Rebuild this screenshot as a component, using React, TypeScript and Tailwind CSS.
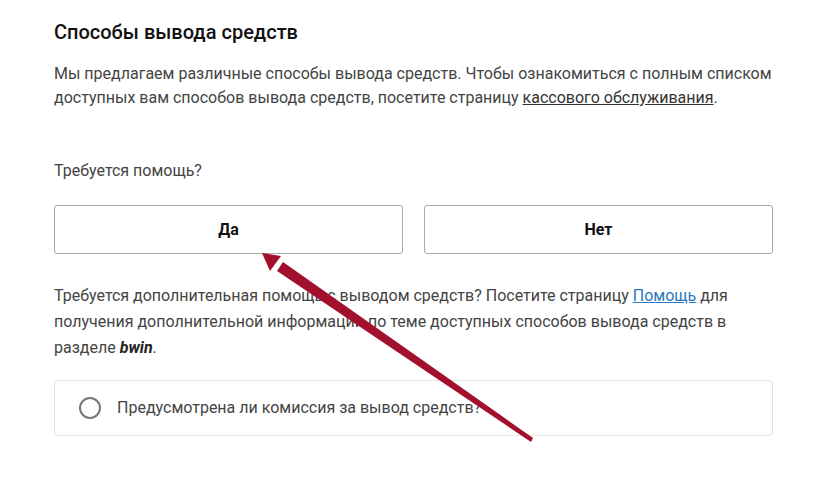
import React from "react";

const App: React.FC = () => {
  return (
    <div className="relative min-h-screen bg-white font-['Roboto',sans-serif]">
      <div className="w-[719px] ml-[54px] pt-[18px]">
        <h2 className="text-[20px] leading-[28px] font-medium text-[#111]">
          Способы вывода средств
        </h2>
        <p className="mt-[16px] text-[16px] leading-[24px] text-[#444]">
          Мы предлагаем различные способы вывода средств. Чтобы ознакомиться с полным списком
          доступных вам способов вывода средств, посетите страницу{" "}
          <a href="#" className="underline text-[#333]">
            кассового обслуживания
          </a>
          .
        </p>
        <p className="mt-[49px] text-[16px] leading-[24px] text-[#444]">Требуется помощь?</p>
        <div className="mt-[22px] grid grid-cols-2 gap-[21px]">
          <button className="h-[49px] rounded-[3px] border border-[#a8a8a8] bg-white text-[16px] font-bold text-[#111]">
            Да
          </button>
          <button className="h-[49px] rounded-[3px] border border-[#a8a8a8] bg-white text-[16px] font-bold text-[#111]">
            Нет
          </button>
        </div>
        <p className="mt-[29px] text-[16px] leading-[26px] text-[#444]">
          Требуется дополнительная помощь с выводом средств? Посетите страницу{" "}
          <a href="#" className="underline text-[#2a7ac0]">
            Помощь
          </a>{" "}
          для получения дополнительной информации по теме доступных способов вывода средств в
          разделе <b className="italic text-[#222]">bwin</b>.
        </p>
        <div className="mt-[19px] h-[56px] flex items-center rounded-[4px] border border-[#e2e2e2] pl-[24px]">
          <span className="w-[22px] h-[22px] rounded-full border-2 border-[#777]" />
          <span className="ml-[16px] text-[16px] text-[#444]">
            Предусмотрена ли комиссия за вывод средств?
          </span>
        </div>
      </div>

      <svg
        className="absolute left-0 top-0 pointer-events-none"
        width="834"
        height="484"
        viewBox="0 0 834 484"
      >
        <polygon points="531,442 533,438 283,262 277,271" fill="#a3102e" />
        <polygon points="262,253 281,256 270,271" fill="#a3102e" />
      </svg>
    </div>
  );
};

export default App;
